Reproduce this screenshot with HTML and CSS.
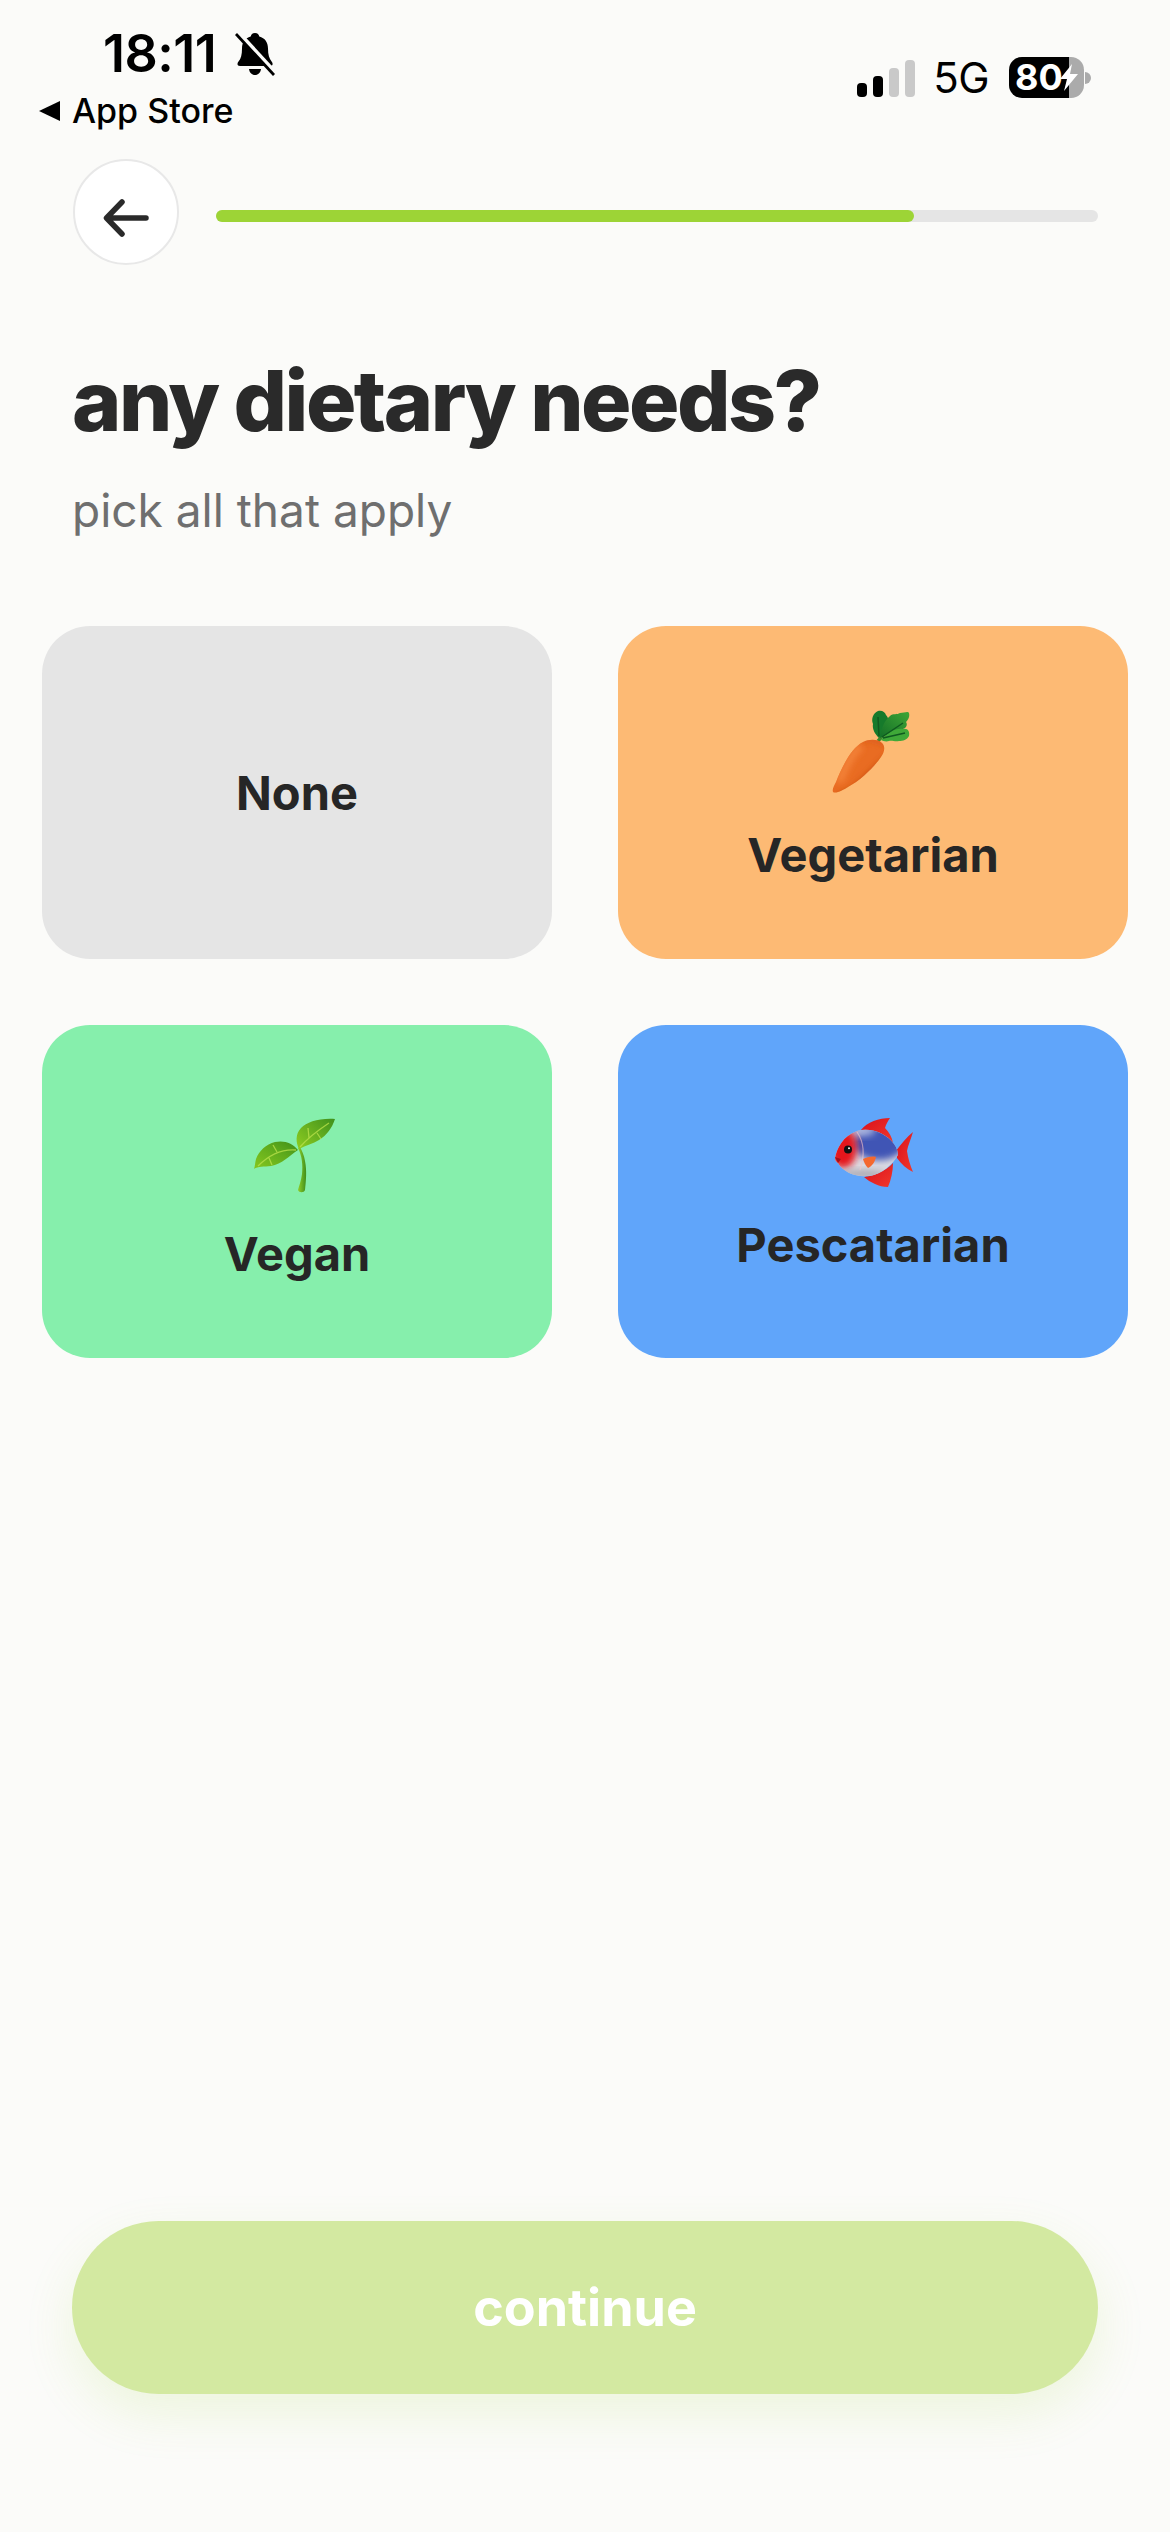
FILE: index.html
```html
<!DOCTYPE html>
<html lang="en">
<head>
<meta charset="utf-8">
<title>any dietary needs?</title>
<link rel="stylesheet" href="styles.css">
</head>
<body>
<div class="screen">
  <header class="status">
    <div class="status-left">
      <div class="time-row">
        <span class="time">18:11</span>
        <svg class="bell" viewBox="0 0 40 44" width="40" height="44"><path d="M20 1c2.600 0 4 1.800 4.300 3.600 5.700 1.500 8.700 6 8.700 12 0 6 1.200 10 3.600 13 1.800 2.200 1.200 4.400-1.400 4.400H5c-2.700 0-3.300-2.200-1.500-4.400C6 27 7 22.600 7 16.600c0-6 3-10.500 8.700-12C16 2.800 17.400 1 20 1z" fill="#000"/><path d="M14 37h12c-.4 3.500-2.800 6-6 6s-5.600-2.500-6-6z" fill="#000"/><path d="M3 0l36 39" stroke="#fbfbf9" stroke-width="4"/><path d="M1 2l38 41" stroke="#000" stroke-width="2.800"/></svg>
      </div>
      <div class="back-app">
        <span class="tri"></span>
        <span>App Store</span>
      </div>
    </div>
    <div class="status-right">
      <div class="signal">
        <i class="bar b1"></i><i class="bar b2"></i><i class="bar b3 off"></i><i class="bar b4 off"></i>
      </div>
      <span class="net">5G</span>
      <div class="battery">
        <div class="batt-body">
          <span class="batt-num">80</span>
          <svg class="bolt" viewBox="0 0 18 27" width="18" height="27"><path d="M12 0L0 15h7L4 27 18 10h-8z" fill="#fff"/></svg>
        </div>
        <i class="nub"></i>
      </div>
    </div>
  </header>

  <nav class="topnav">
    <button class="back" type="button" aria-label="back">
      <svg viewBox="0 0 46 38" width="46" height="38"><path d="M43 19H4M19 3L3.500 19 19 35" fill="none" stroke="#2a2a2a" stroke-width="5.500" stroke-linecap="round" stroke-linejoin="round"/></svg>
    </button>
    <div class="progress"><div class="progress-fill"></div></div>
  </nav>

  <section class="intro">
    <h1>any dietary needs?</h1>
    <p>pick all that apply</p>
  </section>

  <section class="grid">
    <div class="card none"><span class="label">None</span></div>

    <div class="card veg">
      <svg class="emoji" viewBox="0 0 120 125" width="120" height="125">
        <defs>
          <clipPath id="cc"><path d="M20 90C19 87 21 84 23 80 29 65 38 46 50 40 56 37 65 37 69 41 73 45 71 51 68 55 61 65 48 78 35 85 30 88 23 92 20 90z"/></clipPath>
          <filter id="b3" x="-50%" y="-50%" width="200%" height="200%"><feGaussianBlur stdDeviation="3"/></filter>
          <linearGradient id="cl" x1="0" y1="1" x2="1" y2="0"><stop offset="0" stop-color="#136f27"/><stop offset="1" stop-color="#3fa636"/></linearGradient>
        </defs>
        <path d="M65 39C70 33 74 29 80 25" stroke="#3c8a2c" stroke-width="3.500" fill="none"/>
        <path d="M66 36C62 32 59 27 60 22 58 17 60 11 65 9 69 8 72 10 73 13 76 16 76 21 75 25 73 29 69 33 66 36z" fill="#167a2b"/>
        <path d="M67 36C68 27 71 19 77 14 80 11 84 13 87 11 91 11 95 9 96 11 97 15 95 18 93 20 95 23 93 26 90 27 84 30 75 31 67 36z" fill="url(#cl)"/>
        <path d="M68 38C74 31 82 26 90 27 95 26 97 30 96 34 94 38 90 39 86 39 82 40 79 38 76 39 73 40 70 39 68 38z" fill="#3fa838"/>
        <path d="M69 35L90 21M70 36L92 31M66 34L65 15" stroke="#0f5a20" stroke-width="1.500" fill="none"/>
        <g clip-path="url(#cc)">
          <rect x="10" y="30" width="70" height="70" fill="#e96c22"/>
          <path d="M20 95L40 85 75 52 78 70 40 100z" fill="#c44a12" filter="url(#b3)"/>
          <path d="M48 44C38 52 32 66 26 80" stroke="#f4843a" stroke-width="7" fill="none" filter="url(#b3)"/>
          <path d="M50 38C58 36 68 38 72 44" stroke="#d4531a" stroke-width="3" fill="none" filter="url(#b3)"/>
        </g>
      </svg>
      <span class="label">Vegetarian</span>
    </div>

    <div class="card vegan">
      <svg class="emoji" viewBox="0 0 120 125" width="120" height="125">
        <defs>
          <linearGradient id="sl" x1="0" y1="1" x2="1" y2="0"><stop offset="0" stop-color="#86c71f"/><stop offset=".6" stop-color="#5eaa1c"/><stop offset="1" stop-color="#3f8f1a"/></linearGradient>
          <linearGradient id="sr" x1="0" y1="0.8" x2="1" y2="0"><stop offset="0" stop-color="#88c820"/><stop offset="1" stop-color="#3f911c"/></linearGradient>
          <linearGradient id="st" x1="0" y1="0" x2="1" y2="0"><stop offset="0" stop-color="#8fcf2a"/><stop offset="1" stop-color="#3f8e1c"/></linearGradient>
        </defs>
        <path d="M61 47C65 55 66 64 65 73 64 80 62 85 61 89 62 92 67 92 68 89 69 80 70 70 68 60 67 54 65 50 63 46z" fill="url(#st)"/>
        <path d="M62 48C59 42 58 33 64 27 70 21 82 17 98 18 95 27 90 34 82 39 76 43 69 44 62 48z" fill="url(#sr)"/>
        <path d="M63 46C70 38 80 30 92 22M72 37L71 27M80 32L84 38" stroke="#b7e04a" stroke-width="1.300" fill="none" opacity=".8"/>
        <path d="M61 49C56 42 47 39 38 41 29 43 22 50 19 58 18 62 18 65 17 68 21 65 27 66 34 65 45 63 52 55 61 49z" fill="url(#sl)"/>
        <path d="M59 49C47 48 33 53 21 65M40 51L36 44M32 57L35 64" stroke="#b7e04a" stroke-width="1.300" fill="none" opacity=".8"/>
      </svg>
      <span class="label">Vegan</span>
    </div>

    <div class="card pesc">
      <svg class="emoji" viewBox="0 0 120 107" width="120" height="107">
        <defs>
          <clipPath id="fc"><path d="M22 48C24 38 30 26 44 21 58 17 74 24 81 34 84 38 85 42 85 45 80 54 69 65 55 66 42 67 30 62 25 53 23 52 22 50 22 48z"/></clipPath>
          <filter id="b5" x="-50%" y="-50%" width="200%" height="200%"><feGaussianBlur stdDeviation="3.500"/></filter>
          <linearGradient id="fr" x1="0" y1="0" x2="1" y2="1"><stop offset="0" stop-color="#d9101c"/><stop offset="1" stop-color="#f2382a"/></linearGradient>
        </defs>
        <path d="M48 20C54 12 66 8 77 8 75 11 73 14 72 18 76 22 79 27 80 33L60 24z" fill="url(#fr)"/>
        <path d="M51 67C60 66 72 62 80 53 80 61 78 70 75 77 70 77 66 76 62 74 58 72 54 70 51 67z" fill="url(#fr)"/>
        <path d="M83 41C88 34 94 27 100 22 98 29 95 35 94 41 95 48 97 55 100 62 94 59 88 54 84 48z" fill="url(#fr)"/>
        <g clip-path="url(#fc)">
          <rect x="15" y="10" width="75" height="62" fill="#dcdbe2"/>
          <ellipse cx="66" cy="33" rx="26" ry="17" fill="#3f55b5" filter="url(#b5)"/>
          <ellipse cx="50" cy="21" rx="12" ry="5" fill="#a9b4de" filter="url(#b5)"/>
          <ellipse cx="30" cy="38" rx="14" ry="20" fill="#e5141f" filter="url(#b5)"/>
          <ellipse cx="50" cy="64" rx="24" ry="4" fill="#a9a7b0" filter="url(#b5)"/>
        </g>
        <path d="M44 22C51 32 52 45 47 60" stroke="#f6c4c8" stroke-width="1.200" fill="none" opacity=".6"/>
        <path d="M22 47L28 49 25 53z" fill="#a5101b"/>
        <circle cx="35" cy="39.500" r="4" fill="#111"/><circle cx="36" cy="38.200" r="1" fill="#fff"/>
        <path d="M50 49C54 47 59 46 63 47 62 52 59 56 55 58 52 55 51 52 50 49z" fill="#f4682f"/>
      </svg>
      <span class="label">Pescatarian</span>
    </div>
  </section>

  <footer class="footer">
    <button class="continue" type="button">continue</button>
  </footer>
</div>
</body>
</html>
```

FILE: styles.css
```css
* { box-sizing: border-box; }
html, body { margin: 0; padding: 0; }
body { background: #fbfbf9; font-family: Inter, "Liberation Sans", sans-serif; color: #2a2a2a; }
.screen { width: 1170px; height: 2532px; display: flex; flex-direction: column; overflow: hidden; }

.status { display: flex; justify-content: space-between; align-items: flex-start; padding: 26px 86px 0 39px; height: 159px; color: #000; }
.status-left { display: flex; flex-direction: column; }
.time-row { display: flex; align-items: center; gap: 19px; padding-left: 64px; height: 56px; }
.time { font-size: 52px; font-weight: 600; line-height: 56px; letter-spacing: -0.500px; }
.bell { display: block; }
.back-app { display: flex; align-items: center; gap: 12px; font-size: 34px; font-weight: 500; line-height: 44px; margin-top: 7px; }
.tri { width: 0; height: 0; border-style: solid; border-width: 10px 21px 10px 0; border-color: transparent #000 transparent transparent; }

.status-right { display: flex; align-items: center; padding-top: 31px; }
.signal { display: flex; align-items: flex-end; gap: 6px; height: 37px; margin-top: 2px; }
.bar { display: block; width: 10px; border-radius: 4px; background: #000; }
.b1 { height: 14px; }
.b2 { height: 21px; }
.b3 { height: 29px; }
.b4 { height: 37px; }
.off { background: #c9c9c9; }
.net { font-size: 42px; font-weight: 400; line-height: 41px; margin-left: 18px; letter-spacing: -0.500px; }
.battery { position: relative; margin-left: 20px; }
.batt-body { width: 75px; height: 41px; border-radius: 13px; background: linear-gradient(90deg, #000 0 60px, #ababab 60px); display: flex; align-items: center; padding-left: 6px; color: #fff; }
.batt-num { font-size: 36px; font-weight: 700; line-height: 41px; letter-spacing: 0; }
.bolt { margin-left: -3px; }
.nub { position: absolute; left: 76px; top: 15px; width: 6px; height: 12px; border-radius: 0 6px 6px 0; background: #ababab; }

.topnav { display: flex; align-items: center; gap: 37px; padding: 0 72px 0 73px; }
.back { width: 106px; height: 106px; border-radius: 50%; background: #fff; border: 2px solid #e8e8e8; display: flex; align-items: center; justify-content: center; padding: 11px 0 0; }
.progress { flex: 1; height: 12px; margin-top: 7px; border-radius: 6px; background: #e5e5e5; }
.progress-fill { width: 698px; height: 12px; border-radius: 6px; background: #9dd436; }

.intro { padding: 88px 72px 0; }
h1 { margin: 0; font-size: 84px; font-weight: 800; line-height: 96px; letter-spacing: -2.500px; }
.intro p { margin: 31px 0 0; font-size: 46px; font-weight: 400; line-height: 60px; color: #6f6f6f; }

.grid { display: grid; grid-template-columns: 510px 510px; grid-auto-rows: 333px; gap: 66px; padding: 86px 42px 0; }
.card { border-radius: 48px; display: flex; flex-direction: column; align-items: center; justify-content: center; }
.none { background: #e5e5e5; }
.veg { background: #fdba74; }
.vegan { background: #86efac; }
.pesc { background: #60a5fa; }
.emoji { display: block; }
.label { font-size: 47px; font-weight: 700; line-height: 56px; color: #262626; }

.footer { margin-top: auto; padding: 0 72px 138px; }
.continue { display: block; width: 100%; height: 173px; border: 0; border-radius: 87px; background: #d3e9a1; color: #fff; font-family: inherit; font-size: 52px; font-weight: 700; box-shadow: 0 20px 50px rgba(157, 212, 54, 0.14); }
```
